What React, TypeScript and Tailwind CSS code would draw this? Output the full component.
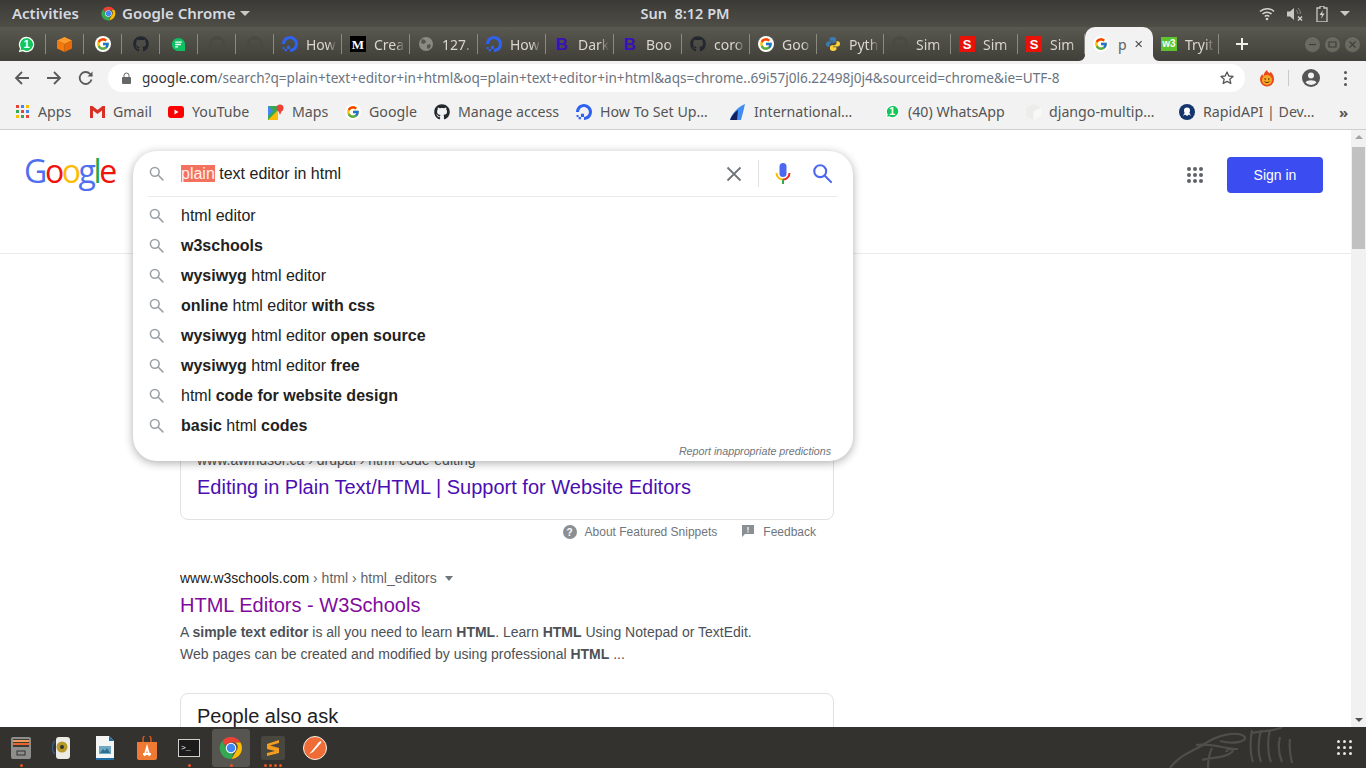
import React from "react";
import { FaGithub } from "react-icons/fa";
import { FcGoogle } from "react-icons/fc";
import { SiDigitalocean } from "react-icons/si";

const ui = "font-['Noto_Sans','Open_Sans',sans-serif]";

function Mag({ c = "#9aa0a6", s = 18 }: { c?: string; s?: number }) {
  return (
    <svg width={s} height={s} viewBox="0 0 24 24" fill="none" stroke={c} strokeWidth="2.2">
      <circle cx="9.6" cy="9.6" r="6.2" />
      <path d="M14.2 14.2L21 21" strokeLinecap="round" />
    </svg>
  );
}
function G({ s = 16 }: { s?: number }) {
  return (
    <span className="flex items-center justify-center rounded-full bg-white" style={{ width: s, height: s }}>
      <FcGoogle size={s - 2} />
    </span>
  );
}
function Do({ s = 16 }: { s?: number }) {
  return <SiDigitalocean size={s} color="#2f62f0" />;
}
function Git({ c = "#23282e", s = 16 }: { c?: string; s?: number }) {
  return <FaGithub size={s} color={c} />;
}
function Wa({ s = 17 }: { s?: number }) {
  return (
    <span className="relative flex items-center justify-center" style={{ width: s, height: s }}>
      <svg width={s} height={s} viewBox="0 0 20 20" className="absolute inset-0">
        <path d="M10 1a9 9 0 0 0-7.7 13.6L1 19l4.6-1.2A9 9 0 1 0 10 1z" fill="#fff" />
        <path d="M10 2.5a7.5 7.5 0 0 0-6.3 11.5l-.8 3 3-.8A7.5 7.5 0 1 0 10 2.5z" fill="#11c65b" />
      </svg>
      <span className="relative text-[11px] font-bold leading-none text-white font-['Liberation_Sans',sans-serif]">1</span>
    </span>
  );
}
function Chat() {
  return (
    <svg width="15" height="15" viewBox="0 0 16 16">
      <path d="M8 1a7 7 0 0 0-7 7c0 3.9 3.1 7 7 7h7V8a7 7 0 0 0-7-7z" fill="#0fbf63" />
      <path d="M4.5 5.5h7M4.5 8h6M4.5 10.5h3" stroke="#fff" strokeWidth="1.4" />
    </svg>
  );
}
function Cube() {
  return (
    <svg width="17" height="17" viewBox="0 0 17 17">
      <path d="M8.5 1L16 4.5 8.5 8 1 4.5z" fill="#ff9a2b" />
      <path d="M1 4.5L8.5 8v8L1 12.5z" fill="#f57a0c" />
      <path d="M16 4.5L8.5 8v8l7.5-3.5z" fill="#e96a05" />
    </svg>
  );
}
function Globe() {
  return (
    <svg width="16" height="16" viewBox="0 0 16 16">
      <circle cx="8" cy="8" r="7" fill="#8a8a85" />
      <path d="M4 3l3 1 1 2-2 2-3-1zM9 9l3-1 1 2-2 3-2-1z" fill="#55544d" />
    </svg>
  );
}
function B() {
  return <span className="w-4 text-center text-[17px] font-black leading-none text-[#3a10b8] font-['Liberation_Sans',sans-serif]">B</span>;
}
function Py() {
  const p = "M12 1.5c-4 0-5.2 1.3-5.2 3.3V7.2H12v1H4.8C2.7 8.2 1.5 10 1.5 12.2s1.2 3.8 3.3 3.8h2v-2.6c0-1.9 1.5-3.3 3.3-3.3h3.7c1.5 0 2.7-1.2 2.7-2.8V4.8c0-2-1.5-3.3-4.5-3.3z";
  return (
    <svg width="16" height="16" viewBox="0 0 24 24">
      <path d={p} fill="#3b7bb3" />
      <path d={p} fill="#ffd43b" transform="rotate(180 12 12)" />
    </svg>
  );
}
function S() {
  return (
    <span className="flex h-4 w-4 items-center justify-center bg-[#e81208] text-[13px] font-bold leading-none text-white font-['Liberation_Sans',sans-serif]">S</span>
  );
}
function M() {
  return (
    <span className="flex h-4 w-4 items-center justify-center bg-black text-[13px] font-bold leading-none text-white font-['Liberation_Serif',serif]">M</span>
  );
}
function W3() {
  return (
    <span className="flex h-[14px] w-4 items-center justify-center bg-[#5bc42f] text-[10px] font-bold leading-none text-white font-['Liberation_Sans',sans-serif]">w3</span>
  );
}
function Flame() {
  return (
    <svg width="18" height="18" viewBox="0 0 18 18">
      <path d="M9 1c.5 2 1.5 2.5 3 3.2.2-.7.2-1.2.1-1.8C15 4.500 16 7.500 16 10.500A7 7 0 0 1 2 10.500C2 8 3 6.500 4.500 5c0 1 .3 1.700 1 2.200C5.500 4.800 7 2.500 9 1z" fill="#e8491d" />
      <circle cx="9" cy="11" r="5" fill="#f7a823" />
      <circle cx="7.200" cy="10" r=".8" fill="#4a2408" />
      <circle cx="10.800" cy="10" r=".8" fill="#4a2408" />
      <path d="M6.500 12.500c1.500 1.500 3.500 1.500 5 0" stroke="#4a2408" strokeWidth=".9" fill="none" />
    </svg>
  );
}
function ChromeIcon({ s = 16 }: { s?: number }) {
  return (
    <svg width={s} height={s} viewBox="0 0 48 48">
      <path d="M24 2a22 22 0 0 1 19 11H24a11 11 0 0 0-10.500 7.500L6.500 10A22 22 0 0 1 24 2z" fill="#ea4335" />
      <path d="M43 13a22 22 0 0 1-18 33l10-17a11 11 0 0 0-2-16z" fill="#fbbc05" />
      <path d="M25 46A22 22 0 0 1 6.500 10l10 17.500a11 11 0 0 0 12.500 6z" fill="#34a853" />
      <circle cx="24" cy="24" r="10.500" fill="#fff" />
      <circle cx="24" cy="24" r="8.500" fill="#4285f4" />
    </svg>
  );
}

function Pinned({ children }: { children: React.ReactNode }) {
  return <div className="flex h-[20px] w-[38px] items-center justify-center border-r border-[#8b8a80]">{children}</div>;
}
function Tab({ icon, t, w = "w-[68px]" }: { icon: React.ReactNode; t: string; w?: string }) {
  return (
    <div className={`flex h-[20px] ${w} items-center gap-2 border-r border-[#8b8a80] pl-2 pr-1`}>
      <span className="flex w-4 shrink-0 items-center justify-center">{icon}</span>
      <span className="min-w-0 flex-1 overflow-hidden whitespace-nowrap text-[14px] text-[#d9d7cd] [mask-image:linear-gradient(to_right,black_70%,transparent)]">{t}</span>
    </div>
  );
}
function TabStrip() {
  return (
    <div className="flex h-[34px] items-center bg-gradient-to-b from-[#5a5950] to-[#403f39] pl-2">
      <Pinned><Wa /></Pinned>
      <Pinned><Cube /></Pinned>
      <Pinned><G /></Pinned>
      <Pinned><Git /></Pinned>
      <Pinned><Chat /></Pinned>
      <Pinned><Git c="#4a4943" /></Pinned>
      <Pinned><Git c="#4a4943" /></Pinned>
      <Tab icon={<Do />} t="How" />
      <Tab icon={<M />} t="Crea" />
      <Tab icon={<Globe />} t="127." />
      <Tab icon={<Do />} t="How" />
      <Tab icon={<B />} t="Dark" />
      <Tab icon={<B />} t="Boo" />
      <Tab icon={<Git />} t="coro" />
      <Tab icon={<G />} t="Goo" w="w-[67px]" />
      <Tab icon={<Py />} t="Pyth" w="w-[67px]" />
      <Tab icon={<Git c="#4a4943" />} t="Sim" w="w-[67px]" />
      <Tab icon={<S />} t="Sim" w="w-[67px]" />
      <Tab icon={<S />} t="Sim" w="w-[67px]" />
      <div className="relative flex h-[34px] w-[68px] items-center gap-2 self-end rounded-t-[10px] bg-[#f2f2f2] pl-2 pr-[11px]">
        <svg width="6" height="6" viewBox="0 0 6 6" className="absolute bottom-0 left-[-6px]"><path d="M6 0v6H0c3 0 6-3 6-6z" fill="#f2f2f2" /></svg>
        <svg width="6" height="6" viewBox="0 0 6 6" className="absolute bottom-0 right-[-6px]"><path d="M0 0v6h6C3 6 0 3 0 0z" fill="#f2f2f2" /></svg>
        <span className="flex w-4 shrink-0 justify-center"><G /></span>
        <span className="ml-[1px] flex-1 text-[14px] text-[#5f5f5f]">p</span>
        <svg width="10" height="10" viewBox="0 0 10 10" stroke="#444" strokeWidth="1.500"><path d="M1 1l8 8M9 1l-8 8" /></svg>
      </div>
      <Tab icon={<W3 />} t="Tryit" w="w-[66px]" />
      <svg width="14" height="14" viewBox="0 0 14 14" stroke="#eeeeea" strokeWidth="2" className="ml-4"><path d="M7 1v12M1 7h12" /></svg>
      <div className="ml-auto mr-[5px] flex items-center gap-[3px]">
        {["M5 8.500h7", "M5 6h7v5H5z", "M5.500 5.500l6 6M11.500 5.500l-6 6"].map((d) => (
          <svg key={d} width="17" height="17" viewBox="0 0 17 17" fill="none">
            <circle cx="8.500" cy="8.500" r="8" fill="#6b6a61" stroke="#4b4a43" />
            <path d={d} stroke="#3e3d37" strokeWidth="1.200" />
          </svg>
        ))}
      </div>
    </div>
  );
}

function Toolbar() {
  return (
    <div className="flex h-[34px] items-center bg-[#f2f2f2]">
      <div className="flex w-[108px] items-center gap-4 pl-[14px]">
        <svg width="16" height="16" viewBox="0 0 16 16" fill="none" stroke="#5a5a5a" strokeWidth="1.800"><path d="M15 8H2M8 2L2 8l6 6" /></svg>
        <svg width="16" height="16" viewBox="0 0 16 16" fill="none" stroke="#5a5a5a" strokeWidth="1.800"><path d="M1 8h13M8 2l6 6-6 6" /></svg>
        <svg width="16" height="16" viewBox="0 0 16 16" fill="none" stroke="#5a5a5a" strokeWidth="1.800"><path d="M13.500 9.500A6 6 0 1 1 12 3.800L14 6" /><path d="M14.500 1.500v5h-5" fill="#5a5a5a" strokeWidth="0" /></svg>
      </div>
      <div className={`flex h-[28px] w-[1137px] items-center rounded-full bg-white pl-[14px] pr-[10px] ${ui}`}>
        <svg width="9" height="12" viewBox="0 0 9 12" className="shrink-0"><path d="M1 5h7a1 1 0 0 1 1 1v5a1 1 0 0 1-1 1H1a1 1 0 0 1-1-1V6a1 1 0 0 1 1-1z" fill="#666" /><path d="M2 5V3.500a2.500 2.500 0 0 1 5 0V5" stroke="#666" fill="none" /></svg>
        <span className="ml-[11px] whitespace-nowrap text-[13.6px] text-[#6b7480]">
          <span className="text-[#30343a]">google.com</span>/search?q=plain+text+editor+in+html&amp;oq=plain+text+editor+in+html&amp;aqs=chrome..69i57j0l6.22498j0j4&amp;sourceid=chrome&amp;ie=UTF-8
        </span>
        <svg width="16" height="16" viewBox="0 0 24 24" fill="none" stroke="#555" strokeWidth="2" className="ml-auto"><path d="M12 3l2.700 6 6.300.6-4.800 4.200 1.500 6.400L12 17l-5.700 3.200 1.500-6.400L3 9.600 9.300 9z" strokeLinejoin="round" /></svg>
      </div>
      <div className="ml-[13px]"><Flame /></div>
      <div className="ml-[12px] h-[16px] w-px bg-[#c9c9c9]" />
      <svg width="20" height="20" viewBox="0 0 20 20" className="ml-[12px]">
        <circle cx="10" cy="10" r="9" fill="#555" />
        <circle cx="10" cy="7.500" r="3" fill="#f2f2f2" />
        <path d="M4.500 14.500c1.500-3 9.500-3 11 0A7.500 7.500 0 0 1 10 17a7.500 7.500 0 0 1-5.500-2.500z" fill="#f2f2f2" />
      </svg>
      <div className="ml-[23px] flex flex-col gap-[3px]">
        <span className="h-[3px] w-[3px] rounded-full bg-[#555]" />
        <span className="h-[3px] w-[3px] rounded-full bg-[#555]" />
        <span className="h-[3px] w-[3px] rounded-full bg-[#555]" />
      </div>
    </div>
  );
}

function Bm({ w, icon, t }: { w: string; icon: React.ReactNode; t: string }) {
  return (
    <div className={`flex ${w} shrink-0 items-center gap-2`}>
      <span className="flex w-4 shrink-0 items-center justify-center">{icon}</span>
      <span className="whitespace-nowrap text-[14.2px] text-[#555]">{t}</span>
    </div>
  );
}
function Bookmarks() {
  const colors = ["#ea4335", "#4285f4", "#fbbc05", "#34a853", "#ea4335", "#4285f4", "#fbbc05", "#34a853", "#ea4335"];
  return (
    <div className={`flex h-[35px] items-center border-b border-[#cfcfcf] bg-[#f2f2f2] pl-[14px] ${ui}`}>
      <Bm w="w-[75px]" t="Apps" icon={
        <span className="grid grid-cols-3 gap-[2px]">
          {colors.map((c, i) => <span key={i} className="h-[3px] w-[3px]" style={{ background: c }} />)}
        </span>} />
      <Bm w="w-[79px]" t="Gmail" icon={
        <svg width="15" height="12" viewBox="0 0 15 12"><path d="M0 0h2.500L7.500 4 12.500 0H15v12h-3V4.500L7.500 8 3 4.500V12H0z" fill="#d93025" /></svg>} />
      <Bm w="w-[100px]" t="YouTube" icon={
        <svg width="16" height="12" viewBox="0 0 16 12"><rect width="16" height="12" rx="3" fill="#f00" /><path d="M6.500 3.500v5l4-2.500z" fill="#fff" /></svg>} />
      <Bm w="w-[77px]" t="Maps" icon={
        <svg width="16" height="16" viewBox="0 0 16 16"><path d="M0 2h10v14H0z" fill="#34a853" /><path d="M0 16L10 6v10z" fill="#fbbc05" /><path d="M0 2l5 5-5 5z" fill="#4285f4" /><circle cx="12" cy="4" r="3.500" fill="#ea4335" /><path d="M10 6l2 5 2-5z" fill="#ea4335" /></svg>} />
      <Bm w="w-[89px]" t="Google" icon={<G />} />
      <Bm w="w-[142px]" t="Manage access" icon={<Git />} />
      <Bm w="w-[154px]" t="How To Set Up…" icon={<Do />} />
      <Bm w="w-[154px]" t="International…" icon={
        <svg width="16" height="16" viewBox="0 0 16 16"><path d="M0 16C2 9 8 3 15 0c-1 4-2 9-4 16z" fill="#3f8df0" /><path d="M0 16c2-5 5-8 8-10l-1 10z" fill="#10205e" /></svg>} />
      <Bm w="w-[141px]" t="(40) WhatsApp" icon={<Wa s={15} />} />
      <Bm w="w-[154px]" t="django-multip…" icon={
        <svg width="15" height="16" viewBox="0 0 15 16"><path d="M7.500 0L15 3.500v9L7.500 16 0 12.500v-9z" fill="#ececea" /><path d="M7.500 7L15 3.500v9L7.500 16z" fill="#f8f8f6" /></svg>} />
      <Bm w="w-[160px]" t="RapidAPI | Dev…" icon={
        <svg width="16" height="16" viewBox="0 0 16 16"><circle cx="8" cy="8" r="8" fill="#14366d" /><circle cx="8" cy="6.500" r="3" fill="#fff" /><path d="M4 12l2-4h4l2 4-2-1.500L8 12l-2-1.500z" fill="#fff" /></svg>} />
      <span className="text-[15px] font-bold leading-none text-[#555]">»</span>
    </div>
  );
}

const suggestions: [string, boolean][][] = [
  [["html editor", false]],
  [["w3schools", true]],
  [["wysiwyg", true], [" html editor", false]],
  [["online", true], [" html editor ", false], ["with css", true]],
  [["wysiwyg", true], [" html editor ", false], ["open source", true]],
  [["wysiwyg", true], [" html editor ", false], ["free", true]],
  [["html ", false], ["code for website design", true]],
  [["basic", true], [" html ", false], ["codes", true]],
];

function SearchBox() {
  return (
    <div className="absolute left-[133px] top-[21px] z-10 h-[310px] w-[720px] rounded-[24px] bg-white shadow-[0_2px_10px_rgba(0,0,0,0.32)]">
      <div className="mx-[15px] flex h-[46px] items-center border-b border-[#e8eaed] pr-[4px]">
        <Mag s={17} />
        <span className="ml-[16px] text-[16px] text-[#222]">
          <span className="bg-[#f4705f] text-[#fff0ee]">plain</span> text editor in html
        </span>
        <svg width="16" height="16" viewBox="0 0 16 16" stroke="#70757a" strokeWidth="1.800" className="ml-auto"><path d="M1.500 1.500l13 13M14.500 1.500l-13 13" /></svg>
        <div className="ml-[16px] h-[27px] w-px bg-[#dfe1e5]" />
        <svg width="16" height="24" viewBox="0 0 16 24" className="ml-[16px]">
          <rect x="4.500" y="1" width="7" height="14" rx="3.500" fill="#4d68f0" />
          <path d="M1.500 11a6.500 6.500 0 0 0 6.500 6.500" stroke="#fbbc05" strokeWidth="2" fill="none" />
          <path d="M14.500 11A6.500 6.500 0 0 1 8 17.500" stroke="#ea2a1c" strokeWidth="2" fill="none" />
          <rect x="7" y="17.500" width="2" height="4.500" fill="#34a853" />
        </svg>
        <div className="ml-[20px]"><Mag c="#4d68f0" s={23} /></div>
      </div>
      <div className="pt-[4px]">
        {suggestions.map((row, i) => (
          <div key={i} className="flex h-[30px] items-center pl-[15px]">
            <span className="mb-[2px]"><Mag s={17} /></span>
            <span className="ml-[16px] whitespace-pre text-[16px] text-[#222]">
              {row.map(([t, b], j) => <span key={j} className={b ? "font-bold" : ""}>{t}</span>)}
            </span>
          </div>
        ))}
      </div>
      <div className="mt-[2px] pr-[22px] text-right text-[10.7px] italic leading-[16px] text-[#70757a]">Report inappropriate predictions</div>
    </div>
  );
}

function GoogleLogo() {
  return (
    <div className="absolute left-[24px] top-[19px] flex text-[32px] font-medium leading-[44px] tracking-[-2.4px] font-['Open_Sans',sans-serif]">
      <span className="text-[#4f6ff0]">G</span>
      <span className="text-[#f0140c]">o</span>
      <span className="text-[#fbbc05]">o</span>
      <span className="text-[#4f6ff0]">g</span>
      <span className="text-[#1fa84f]">l</span>
      <span className="text-[#f0140c]">e</span>
    </div>
  );
}

function Page() {
  return (
    <div className="relative min-h-0 flex-1 overflow-hidden bg-white font-['Liberation_Sans',sans-serif]">
      <header className="relative h-[124px] border-b border-[#ebebeb]">
        <GoogleLogo />
        <div className="absolute left-[1187px] top-[37px] grid grid-cols-3 gap-[2px]">
          {Array.from({ length: 9 }).map((_, i) => <span key={i} className="h-1 w-1 rounded-full bg-[#5f6368]" />)}
        </div>
        <div className="absolute left-[1227px] top-[27px] flex h-[36px] w-[96px] items-center justify-center rounded bg-[#3b4cf0] text-[14px] text-white">Sign in</div>
      </header>
      <SearchBox />
      <main className="ml-[180px] w-[654px]">
        <div className="mt-[60px] flex h-[206px] flex-col justify-end rounded-lg border border-[#dfe1e5] px-4 pb-[19px]">
          <div className="text-[14px] leading-[20px] text-[#555]">www.awindsor.ca › drupal › html-code-editing</div>
          <div className="mt-[4px] text-[20px] leading-[26px] text-[#4b0eb2]">Editing in Plain Text/HTML | Support for Website Editors</div>
        </div>
        <div className="mt-[4px] flex h-[16px] items-center justify-end pr-[18px] text-[12px] text-[#70757a]">
          <span className="flex h-[14px] w-[14px] items-center justify-center rounded-full bg-[#8a8f94] text-[10px] font-bold text-white">?</span>
          <span className="ml-2">About Featured Snippets</span>
          <svg width="12" height="12" viewBox="0 0 12 12" className="ml-[25px] mb-[3px]"><path d="M0 0h12v9H3l-3 3z" fill="#8a8f94" /><path d="M5.400 2h1.200v3.500H5.400zM5.400 6.200h1.200v1.200H5.400z" fill="#fff" /></svg>
          <span className="ml-[9px]">Feedback</span>
        </div>
        <div className="mt-[28px] flex h-[20px] items-center text-[14px] text-[#5f6368]">
          <span className="text-[#202124]">www.w3schools.com</span>&nbsp;› html › html_editors
          <span className="ml-[8px] h-0 w-0 border-x-[4px] border-t-[5px] border-x-transparent border-t-[#70757a]" />
        </div>
        <div className="mt-[4px] text-[20px] leading-[26px] text-[#800b9c]">HTML Editors - W3Schools</div>
        <p className="mt-[3px] text-[14px] leading-[22px] text-[#4d5156]">
          A <b>simple text editor</b> is all you need to learn <b>HTML</b>. Learn <b>HTML</b> Using Notepad or TextEdit.<br />
          Web pages can be created and modified by using professional <b>HTML</b> ...
        </p>
        <div className="mt-[28px] h-[60px] rounded-t-lg border border-[#dfe1e5] px-4 pt-[9px] text-[20px] leading-[26px] text-[#202124]">People also ask</div>
      </main>
      <div className="absolute bottom-0 right-0 top-0 flex w-[15px] flex-col items-center bg-[#f1f1f1]">
        <span className="mt-[5px] h-0 w-0 border-x-[4px] border-b-[4px] border-x-transparent border-b-[#a3a3a3]" />
        <div className="mt-[8px] h-[102px] w-[13px] bg-[#c1c1c1]" />
        <span className="mb-[5px] mt-auto h-0 w-0 border-x-[4px] border-t-[4px] border-x-transparent border-t-[#505050]" />
      </div>
    </div>
  );
}

function TopBar() {
  return (
    <div className={`flex h-[27px] items-center bg-gradient-to-b from-[#3b3a36] to-[#4e4d46] font-semibold text-[#d5dae0] ${ui}`}>
      <span className="ml-[12px] w-[89px] text-[15px]">Activities</span>
      <ChromeIcon s={15} />
      <span className="ml-[6px] text-[15px]">Google Chrome</span>
      <span className="ml-[4px] h-0 w-0 border-x-[5px] border-t-[5px] border-x-transparent border-t-[#c9c9c4]" />
      <span className="ml-[391px] text-[14.5px]">Sun&nbsp;&nbsp;8:12 PM</span>
      <div className="ml-auto mr-[16px] flex items-center gap-[10px]">
        <svg width="16" height="14" viewBox="0 0 16 14" fill="none" stroke="#d5d5d0" strokeWidth="1.500">
          <path d="M1 4.500a10 10 0 0 1 14 0M3.500 7a6.500 6.500 0 0 1 9 0M5.800 9.500a3 3 0 0 1 4.400 0" />
          <circle cx="8" cy="12" r="1.300" fill="#d5d5d0" stroke="none" />
        </svg>
        <svg width="16" height="14" viewBox="0 0 16 14" className="ml-[2px]">
          <path d="M0 4.500h3L7 1v12L3 9.500H0z" fill="#c9c9c4" />
          <path d="M9 3a5 5 0 0 1 2 4M11 1a8 8 0 0 1 2.500 6" stroke="#8a8a84" fill="none" />
          <path d="M11 9.500l4 4M15 9.500l-4 4" stroke="#d5d5d0" strokeWidth="1.300" />
        </svg>
        <svg width="12" height="16" viewBox="0 0 12 16" className="ml-[3px]">
          <path d="M4 0h4v2h3v14H1V2h3z" fill="none" stroke="#c9c9c4" strokeWidth="1.300" />
          <path d="M7 4L3.500 9H6l-1 4 3.500-5.500H6z" fill="#d5d5d0" />
        </svg>
        <span className="ml-[2px] h-0 w-0 border-x-[5px] border-t-[5px] border-x-transparent border-t-[#c9c9c4]" />
      </div>
    </div>
  );
}

function DockSlot({ children, active, dots = 0 }: { children: React.ReactNode; active?: boolean; dots?: number }) {
  return (
    <div className="relative flex h-[38px] w-[42px] items-center justify-center">
      {active && <span className="absolute inset-y-0 left-[2px] right-[2px] rounded-[3px] bg-[#565550]" />}
      <span className="relative">{children}</span>
      {dots > 0 && (
        <span className="absolute bottom-0 left-0 right-0 flex justify-center gap-[2px]">
          {Array.from({ length: dots }).map((_, i) => <span key={i} className="h-[3px] w-[3px] rounded-full bg-[#e95420]" />)}
        </span>
      )}
    </div>
  );
}

function Dock() {
  return (
    <div className="relative flex h-[41px] items-start overflow-hidden bg-[#33322e] pt-[2px]">
      <DockSlot dots={1}>
        <svg width="22" height="24" viewBox="0 0 22 24">
          <rect x="1" y="1" width="20" height="22" rx="2" fill="#8e8e8a" />
          <rect x="3" y="3" width="16" height="8" fill="#3e3a36" />
          <rect x="3" y="4" width="16" height="2" fill="#f29a5c" />
          <rect x="3" y="7" width="16" height="2" fill="#e9662a" />
          <rect x="7" y="15" width="8" height="4" fill="none" stroke="#333" />
        </svg>
      </DockSlot>
      <DockSlot>
        <svg width="22" height="24" viewBox="0 0 22 24">
          <rect x="4" y="1" width="14" height="22" rx="3" fill="#ecebe6" />
          <circle cx="10" cy="11" r="5.500" fill="#b89a2a" />
          <circle cx="10" cy="11" r="2" fill="#333" />
          <path d="M3 5a9 9 0 0 0 0 13" stroke="#3a5a80" strokeWidth="1.500" fill="none" />
        </svg>
      </DockSlot>
      <DockSlot>
        <svg width="20" height="24" viewBox="0 0 20 24">
          <path d="M1 0h13l5 5v19H1z" fill="#f4f6f6" />
          <path d="M14 0l5 5h-5z" fill="#1f6ea8" />
          <rect x="4" y="10" width="12" height="8" fill="#6fa8c4" />
          <path d="M5 17l3-4 2 2 2-3 3 5z" fill="#2e6d8c" />
          <path d="M1 22h18v2H1z" fill="#1f6ea8" />
        </svg>
      </DockSlot>
      <DockSlot>
        <svg width="22" height="24" viewBox="0 0 22 24">
          <path d="M7 6V3a4 4 0 0 1 8 0v3" stroke="#d8551f" strokeWidth="1.500" fill="none" />
          <path d="M1 6h20v16a2 2 0 0 1-2 2H3a2 2 0 0 1-2-2z" fill="#ef7a34" />
          <path d="M8.500 20L11 11l2.500 9M7 18h8" stroke="#fff" strokeWidth="1.800" fill="none" />
        </svg>
      </DockSlot>
      <DockSlot dots={1}>
        <div className="flex h-[18px] w-[22px] items-center border border-[#d0d0cb] bg-[#1b1b1b] pl-[2px] text-[8px] leading-none text-white font-['Liberation_Mono',monospace]">&gt;_</div>
      </DockSlot>
      <DockSlot active dots={1}><ChromeIcon s={24} /></DockSlot>
      <DockSlot dots={4}>
        <div className="flex h-[24px] w-[24px] items-center justify-center rounded-[2px] bg-[#47463f]">
          <svg width="14" height="18" viewBox="0 0 14 18"><path d="M13 1L1 5v4l12 4V9L4 6.500 13 4zM1 9l12 4v1L1 17v-3l8-2-8-2z" fill="#f59d1e" /></svg>
        </div>
      </DockSlot>
      <DockSlot>
        <svg width="24" height="24" viewBox="0 0 24 24">
          <circle cx="12" cy="12" r="11.500" fill="#ef6c37" stroke="#f5f0ea" />
          <path d="M6 18l2-2L16 6c2-1.500 3-1 2 1L10 16z" fill="#fff" />
        </svg>
      </DockSlot>
      <svg width="160" height="41" viewBox="0 0 160 41" fill="none" stroke="#4f4e49" strokeWidth="2.200" className="absolute left-[1168px] top-0 blur-[0.5px]">
        <path d="M2 41C12 27 30 22 38 16c12-8 30-12 38-7 5 5-10 9-24 5M28 18c15-2 30 4 42 4M40 41c0-10 2-16 4-20M34 33c12-3 24-2 30-8 3-4-4-4-6 0M84 3c-2 10-2 24 1 32M93 3c-3 12-3 24 0 32M102 3c-3 10-2 25 1 32M112 10c-2 8-1 18 2 25M122 12c-1 8 0 16 2 24M84 6c10-2 25-2 30-6" />
      </svg>
      <div className="absolute left-[1337px] top-[13px] grid grid-cols-3 gap-[3px]">
        {Array.from({ length: 9 }).map((_, i) => <span key={i} className="h-[3px] w-[3px] rounded-full bg-[#e6e6e2]" />)}
      </div>
    </div>
  );
}

export default function App() {
  return (
    <div className="flex h-screen w-full flex-col overflow-hidden">
      <TopBar />
      <div className={ui}>
        <TabStrip />
        <Toolbar />
        <Bookmarks />
      </div>
      <Page />
      <Dock />
    </div>
  );
}
